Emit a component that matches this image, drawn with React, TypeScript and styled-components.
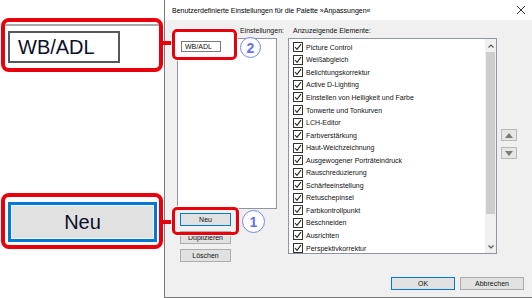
import React from "react";
import styled, { createGlobalStyle } from "styled-components";

const GlobalStyle = createGlobalStyle`
  html, body { margin: 0; padding: 0; background: #fff; }
  body { font-family: "Liberation Sans", Arial, sans-serif; color: #111; }
  * { box-sizing: border-box; }
`;

const RED = "#e8000d";
const BLUE = "#0078d7";

const Canvas = styled.div`
  position: relative;
  width: 532px;
  height: 298px;
  display: flex;
  overflow: hidden;
  background: #fff;
`;

/* ---------- left magnified callouts ---------- */
const LeftPane = styled.div`
  width: 164px;
  flex: none;
  display: flex;
  flex-direction: column;
  padding: 18px 0 0 1px;
`;

const BigCallout = styled.div<{ $h: number; $mt: number }>`
  width: 162px;
  height: ${(p) => p.$h}px;
  margin-top: ${(p) => p.$mt}px;
  border: 4px solid ${RED};
  border-radius: 8px;
  background: #fff;
  display: flex;
  flex-direction: column;
`;

const TopRule = styled.div`
  height: 2px;
  margin-top: 2px;
  background: #a9a9a9;
`;

const BigEdit = styled.div`
  width: 112px;
  height: 32px;
  margin: 5px 0 0 3px;
  border: 2px solid #585858;
  background: #fff;
  font-size: 20px;
  line-height: 28px;
  padding-left: 8px;
  color: #0a0f2a;
`;

const BigButton = styled.div`
  width: 149px;
  height: 40px;
  margin: 5px 0 0 3px;
  border: 3px solid ${BLUE};
  background: #e1e1e1;
  box-shadow: inset 0 0 0 1px #f4f4f4;
  display: flex;
  align-items: center;
  justify-content: center;
  font-size: 20px;
  color: #0a0f2a;
`;

/* ---------- dialog ---------- */
const Dialog = styled.div`
  flex: none;
  width: 368px;
  height: 298px;
  border-left: 1px solid #7a7a7a;
  display: flex;
  flex-direction: column;
  font-size: 7px;
`;

const TitleBar = styled.div`
  height: 20px;
  background: #fff;
  display: flex;
  align-items: center;
  justify-content: space-between;
  padding: 0 6px 0 7px;
  font-size: 7px;
  color: #000;
`;

const Body = styled.div`
  flex: 1;
  background: #f0f0f0;
  border-bottom: 1px solid #7a7a7a;
  display: flex;
  flex-direction: column;
`;

const Main = styled.div`
  display: flex;
  padding: 5px 0 0 12px;
`;

const Column = styled.div<{ $w: number; $ml?: number }>`
  width: ${(p) => p.$w}px;
  margin-left: ${(p) => p.$ml ?? 0}px;
  display: flex;
  flex-direction: column;
`;

const Label = styled.div<{ $ml: number }>`
  height: 13px;
  line-height: 12px;
  margin-left: ${(p) => p.$ml}px;
  white-space: nowrap;
  color: #111;
`;

const ListBox = styled.div<{ $h: number }>`
  height: ${(p) => p.$h}px;
  border: 1px solid #8f95a3;
  background: #fff;
  position: relative;
  display: flex;
  overflow: hidden;
`;

const ListItems = styled.div`
  flex: 1;
  padding: 2px 0 0 4px;
  display: flex;
  flex-direction: column;
`;

const Item = styled.div`
  height: 12.56px;
  flex: none;
  display: flex;
  align-items: center;
  white-space: nowrap;
`;

const CheckBox = styled.span`
  width: 10px;
  height: 10px;
  border: 1px solid #333;
  background: #fff;
  margin-right: 3px;
  display: flex;
  align-items: center;
  justify-content: center;
  flex: none;
`;

const ScrollBar = styled.div`
  width: 11px;
  flex: none;
  background: #f0f0f0;
  display: flex;
  flex-direction: column;
  align-items: center;
`;

const ScrollArrow = styled.div`
  height: 13px;
  width: 100%;
  display: flex;
  align-items: center;
  justify-content: center;
`;

const Thumb = styled.div`
  width: 9px;
  height: 162px;
  background: #cdcdcd;
`;

const Spacer = styled.div`
  flex: 1;
`;

const SmallEdit = styled.div`
  width: 40px;
  height: 11px;
  border: 1px solid #7a7a7a;
  background: #fff;
  line-height: 9px;
  padding-left: 3px;
  font-size: 7px;
`;

const WinButton = styled.div<{ $w: number; $primary?: boolean }>`
  width: ${(p) => p.$w}px;
  height: 13px;
  border: 1px solid ${(p) => (p.$primary ? BLUE : "#adadad")};
  background: #e1e1e1;
  display: flex;
  align-items: center;
  justify-content: center;
  font-size: 7px;
  color: #111;
  flex: none;
`;

const ButtonStack = styled.div`
  display: flex;
  flex-direction: column;
  gap: 5px;
  margin: 4px 0 0 3px;
`;

const ArrowCol = styled.div`
  margin: 104px 0 0 4px;
  display: flex;
  flex-direction: column;
  gap: 6px;
`;

const ArrowBtn = styled.div`
  width: 16px;
  height: 12px;
  border: 1px solid #b9b9b9;
  background: #e6e6e6;
  display: flex;
  align-items: center;
  justify-content: center;
`;

const Footer = styled.div`
  margin-top: auto;
  display: flex;
  justify-content: flex-end;
  gap: 5px;
  padding: 0 8px 7px 0;
`;

/* ---------- overlays ---------- */
const SmallCallout = styled.div<{ $x: number; $y: number; $w: number; $h: number; $fill?: boolean }>`
  position: absolute;
  left: ${(p) => p.$x}px;
  top: ${(p) => p.$y}px;
  width: ${(p) => p.$w}px;
  height: ${(p) => p.$h}px;
  border: 3px solid ${RED};
  border-radius: 5px;
  background: ${(p) => (p.$fill ? "#fff" : "transparent")};
  box-shadow: 0 0 0 1px rgba(255, 255, 255, 0.9);
  padding: 9px 0 0 6px;
`;

const Connector = styled.div<{ $y: number }>`
  position: absolute;
  left: 162px;
  top: ${(p) => p.$y}px;
  width: 12px;
  height: 4px;
  background: ${RED};
`;

const Badge = styled.div<{ $x: number; $y: number; $s: number }>`
  position: absolute;
  left: ${(p) => p.$x}px;
  top: ${(p) => p.$y}px;
  width: ${(p) => p.$s}px;
  height: ${(p) => p.$s}px;
  border: 1.5px solid #7486f2;
  border-radius: 50%;
  background: #fff;
  color: #6174ee;
  font-family: "Liberation Sans", Arial, sans-serif;
  font-weight: bold;
  font-size: 14px;
  display: flex;
  align-items: center;
  justify-content: center;
`;

const items = [
  "Picture Control",
  "Weißabgleich",
  "Belichtungskorrektur",
  "Active D-Lighting",
  "Einstellen von Helligkeit und Farbe",
  "Tonwerte und Tonkurven",
  "LCH-Editor",
  "Farbverstärkung",
  "Haut-Weichzeichnung",
  "Ausgewogener Porträteindruck",
  "Rauschreduzierung",
  "Schärfeeinstellung",
  "Retuschepinsel",
  "Farbkontrollpunkt",
  "Beschneiden",
  "Ausrichten",
  "Perspektivkorrektur",
];

const Check = () => (
  <svg width="8" height="8" viewBox="0 0 8 8">
    <polyline points="1,4 3,6.3 7,1.2" fill="none" stroke="#222" strokeWidth="1.1" />
  </svg>
);

const Chevron = ({ up }: { up?: boolean }) => (
  <svg width="6" height="4" viewBox="0 0 6 4">
    <polyline
      points={up ? "0.5,3.5 3,1 5.5,3.5" : "0.5,0.5 3,3 5.5,0.5"}
      fill="none"
      stroke="#555"
      strokeWidth="1.1"
    />
  </svg>
);

const Triangle = ({ up }: { up?: boolean }) => (
  <svg width="8" height="5" viewBox="0 0 8 5">
    <polygon points={up ? "0,5 4,0 8,5" : "0,0 4,5 8,0"} fill="#7a7a7a" />
  </svg>
);

const CloseIcon = () => (
  <svg width="10" height="10" viewBox="0 0 10 10">
    <path d="M1 1 L9 9 M9 1 L1 9" stroke="#222" strokeWidth="0.9" />
  </svg>
);

export default function App() {
  return (
    <>
      <GlobalStyle />
      <Canvas>
        <LeftPane>
          <BigCallout $h={54} $mt={0}>
            <TopRule />
            <BigEdit>WB/ADL</BigEdit>
          </BigCallout>
          <BigCallout $h={56} $mt={121}>
            <BigButton>Neu</BigButton>
          </BigCallout>
        </LeftPane>

        <Dialog>
          <TitleBar>
            <span>Benutzerdefinierte Einstellungen für die Palette »Anpassungen«</span>
            <CloseIcon />
          </TitleBar>
          <Body>
            <Main>
              <Column $w={100}>
                <Label $ml={63}>Einstellungen:</Label>
                <ListBox $h={171} />
                <ButtonStack>
                  <WinButton $w={51} $primary>
                    Neu
                  </WinButton>
                  <WinButton $w={51}>Duplizieren</WinButton>
                  <WinButton $w={51}>Löschen</WinButton>
                </ButtonStack>
              </Column>
              <Column $w={209} $ml={11}>
                <Label $ml={5}>Anzuzeigende Elemente:</Label>
                <ListBox $h={216}>
                  <ListItems>
                    {items.map((t) => (
                      <Item key={t}>
                        <CheckBox>
                          <Check />
                        </CheckBox>
                        {t}
                      </Item>
                    ))}
                  </ListItems>
                  <ScrollBar>
                    <ScrollArrow>
                      <Chevron up />
                    </ScrollArrow>
                    <Thumb />
                    <Spacer />
                    <ScrollArrow>
                      <Chevron />
                    </ScrollArrow>
                  </ScrollBar>
                </ListBox>
              </Column>
              <ArrowCol>
                <ArrowBtn>
                  <Triangle up />
                </ArrowBtn>
                <ArrowBtn>
                  <Triangle />
                </ArrowBtn>
              </ArrowCol>
            </Main>
            <Footer>
              <WinButton $w={64} $primary>
                OK
              </WinButton>
              <WinButton $w={64}>Abbrechen</WinButton>
            </Footer>
          </Body>
        </Dialog>

        <Connector $y={41} />
        <Connector $y={220} />
        <SmallCallout $x={172} $y={29} $w={65} $h={31} $fill>
          <SmallEdit>WB/ADL</SmallEdit>
        </SmallCallout>
        <SmallCallout $x={172} $y={207} $w={67} $h={28} />
        <Badge $x={240} $y={37} $s={21}>
          2
        </Badge>
        <Badge $x={242} $y={210} $s={23}>
          1
        </Badge>
      </Canvas>
    </>
  );
}
